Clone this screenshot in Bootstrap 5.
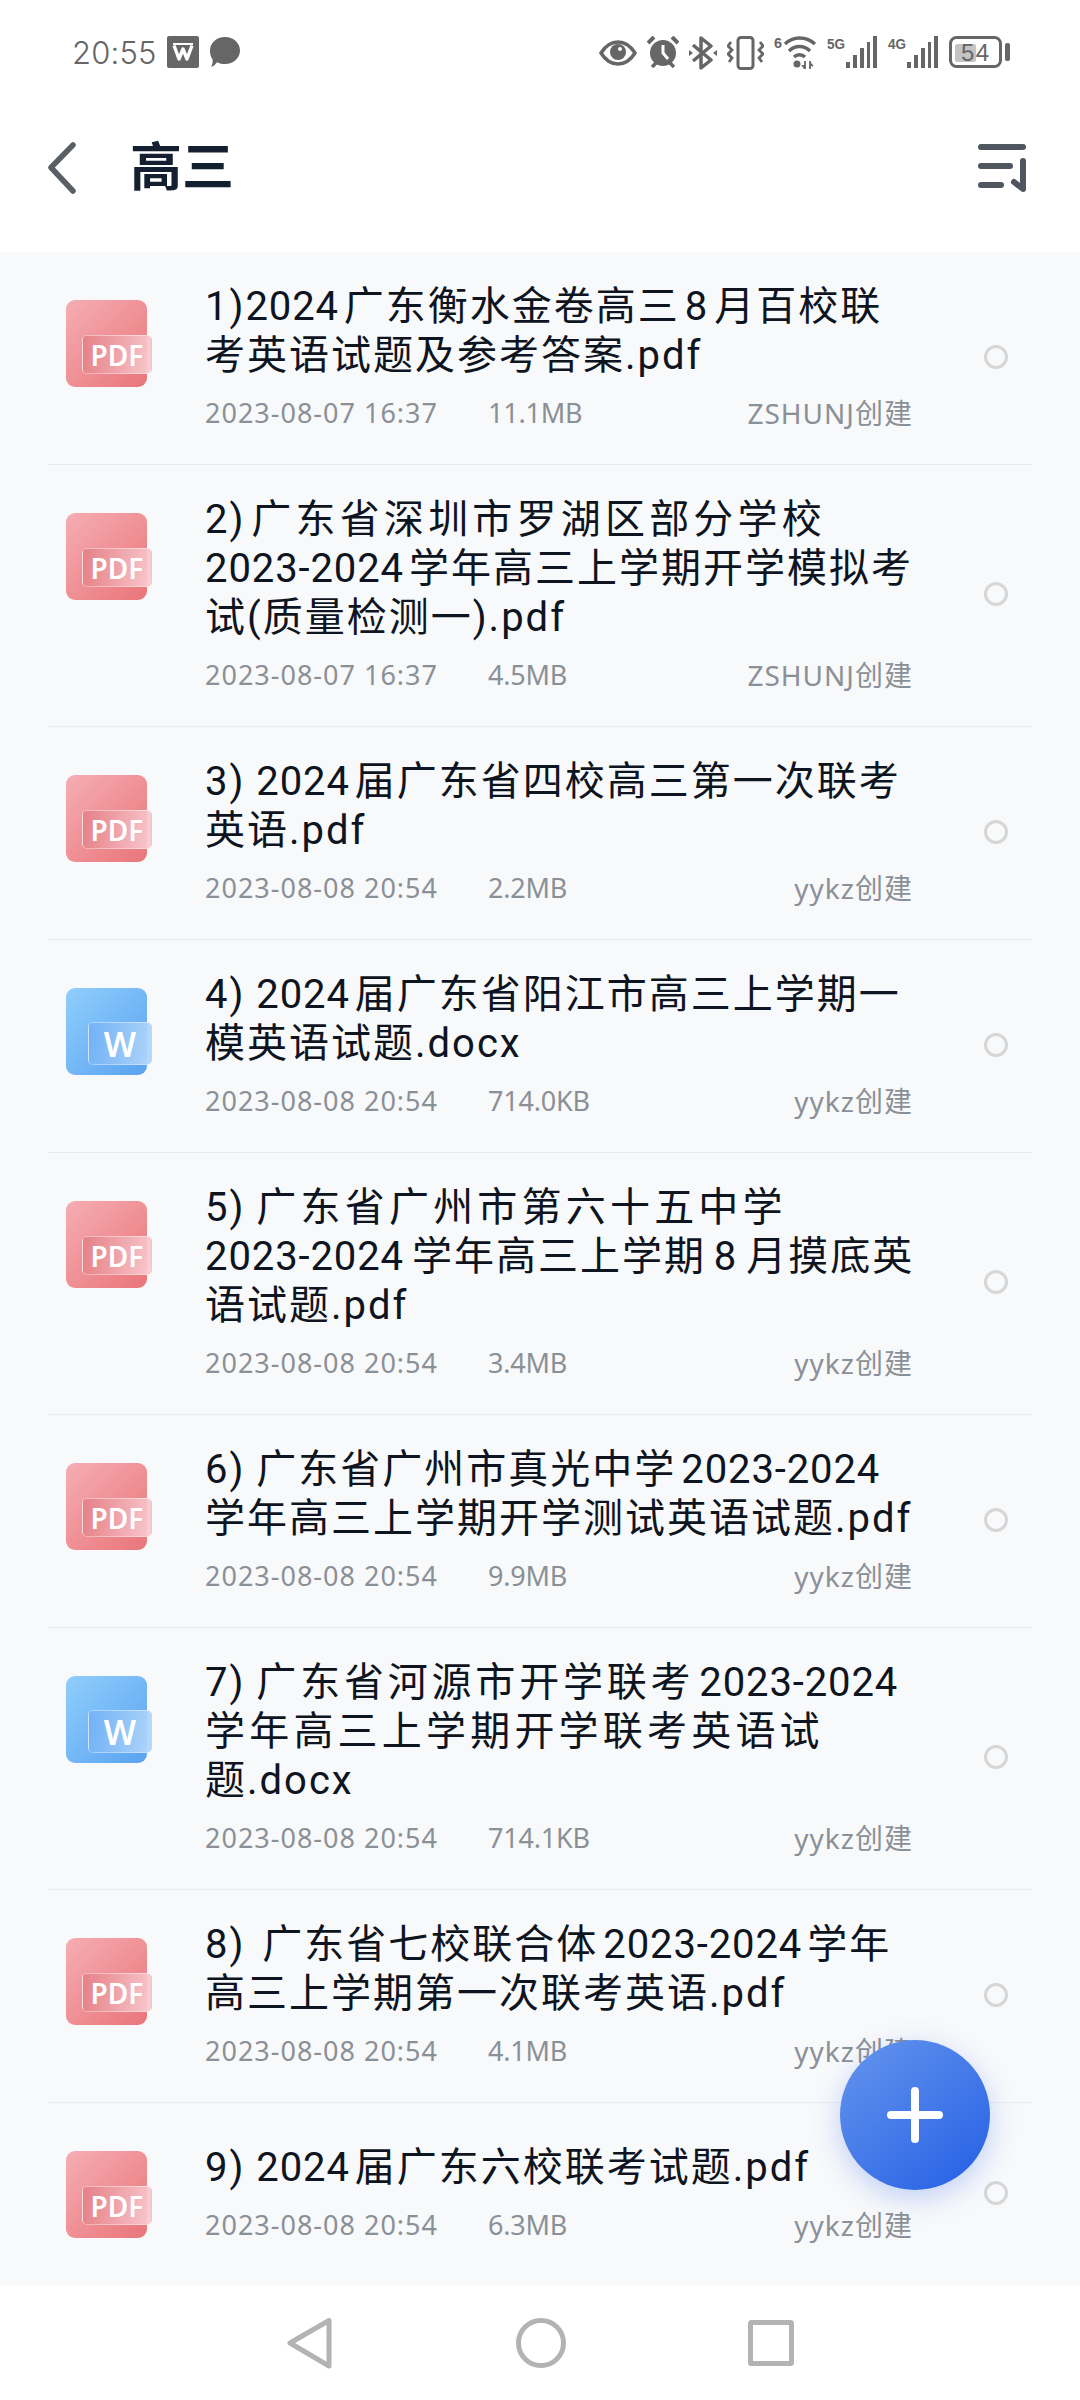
<!DOCTYPE html>
<html lang="zh-CN">
<head>
<meta charset="utf-8">
<title>高三</title>
<link href="https://cdn.jsdelivr.net/npm/bootstrap@5.3.0/dist/css/bootstrap.min.css" rel="stylesheet">
<style>
html,body{margin:0;background:#fff}
.screen{width:1080px;height:2400px;overflow:hidden;font-family:"Noto Sans","Noto Sans CJK SC",sans-serif;background:#fff}
.status-bar{height:84px;padding:36px 70px 0 72px;color:#666;flex:none}
.clock{font-family:"Inter","Noto Sans",sans-serif;font-size:31px;line-height:34px;font-weight:300;letter-spacing:.2px}
.gap-left{gap:10px}
.gap-right{gap:10px}
.app-head{height:168px;padding:0 54px 0 48px;flex:none}
.page-title{font-family:"Noto Sans CJK SC",sans-serif;font-size:52px;font-weight:700;color:#141f30;margin:0 0 8px 54px;line-height:60px}
.file-list{background:#f8f9fb;min-height:0;overflow:hidden}
.list-group-item.file-row{background:transparent;margin:0 48px;padding:0;border-color:#e9ebef;min-height:182px;width:984px}
.file-thumb{width:81px;height:87px;margin:48px 58px 0 18px;border-radius:9px;flex:none}
.thumb-pdf{background:linear-gradient(135deg,#f5aeb3,#e9757a)}
.thumb-doc{background:linear-gradient(135deg,#90cefc,#5aa3f1)}
.thumb-tag{position:absolute;border-radius:5px;border:1.5px solid rgba(255,255,255,.4);color:#fff;font-weight:600;font-family:"Noto Sans",sans-serif;display:flex;align-items:center;justify-content:center;line-height:1}
.thumb-pdf .thumb-tag{left:16px;top:35px;width:70px;height:39px;font-size:28px;background:linear-gradient(100deg,rgba(226,120,126,.75),rgba(248,205,210,.95))}
.thumb-doc .thumb-tag{left:22px;top:34px;width:64px;height:43px;font-size:34px;background:linear-gradient(100deg,rgba(110,175,245,.8),rgba(180,215,250,.95))}
.file-body{width:708px;padding:30px 0 32px}
.file-name{font-family:Roboto,"Noto Sans CJK SC",sans-serif;font-size:40px;line-height:49px;color:#0e1420;letter-spacing:2px;word-spacing:-7px;white-space:nowrap}
.num{letter-spacing:.9px}
.no-a{margin-right:1px}
.no-b{margin-right:6px}
.no-c{margin-right:6px}
.no-d{margin-right:12px}
.spread-s{letter-spacing:3.800px}
.spread-l{letter-spacing:4.200px}
.loose{word-spacing:-4px}
.file-meta{font-size:27px;line-height:38px;color:#8b9096;margin-top:14px;letter-spacing:1px;white-space:nowrap}
.meta-date{width:283px;flex:none}
.meta-size{letter-spacing:-.2px}
.meta-owner{font-size:28px;margin-left:auto}
.pick.form-check-input{width:24px;height:24px;margin:0 24px 3px auto;border:3px solid #d6d6d6;background-color:transparent;flex:none}
.bottom-nav{height:114px;flex:none;background:#fff;padding:30px 0 0 285px}
.nav-glyph{stroke:#b3b3b3;stroke-width:5;fill:none;stroke-linejoin:round}
.nav-mid{margin:0 180px 0 182px}
.fab-add{position:absolute;left:840px;top:2040px;width:150px;height:150px;border-radius:50%;background:linear-gradient(140deg,#6595ed,#245fe5);box-shadow:0 8px 28px rgba(60,110,230,.3);border:0;padding:0}
</style>
</head>
<body>
<div class="screen position-relative d-flex flex-column">
  <div class="status-bar d-flex justify-content-between align-items-start">
    <div class="d-flex align-items-start gap-left">
      <span class="clock">20:55</span>
      <svg width="32" height="32" viewBox="0 0 32 32"><rect width="32" height="32" rx="2" fill="#666"/><path d="M7 9.500 12 23 16 13 20 23 25 9.500" fill="none" stroke="#fff" stroke-width="3.400" stroke-linejoin="round"/><path d="M6 8H26" stroke="#fff" stroke-width="2"/></svg>
      <svg width="32" height="32" viewBox="0 0 32 32"><path d="M16 1C24.500 1 31 7 31 14.500S24.500 28 16 28C13 28 10.500 27.500 8 26.200 6.500 28 4.500 30.500 2 31 3.500 28 4 25.500 3.500 23.200 1.500 20.800 1 17.500 1 14.500 1 7 7.500 1 16 1Z" fill="#666"/></svg>
    </div>
    <div class="d-flex align-items-start gap-right">
      <svg width="38" height="32" viewBox="0 0 38 32"><path d="M2 17C7 9 13 6 19 6S31 9 36 17C31 25 25 28 19 28S7 25 2 17Z" fill="none" stroke="#666" stroke-width="3.500"/><circle cx="19" cy="16" r="8" fill="#666"/><circle cx="21" cy="13" r="2" fill="#fff"/></svg>
      <svg width="32" height="32" viewBox="0 0 32 32"><circle cx="16" cy="17" r="13" fill="#666"/><path d="M16 9V17L21 23" fill="none" stroke="#fff" stroke-width="3"/><path d="M1 7 7 1M25 1 31 7" stroke="#666" stroke-width="4"/><path d="M5 31 9 27M27 31 23 27" stroke="#666" stroke-width="3.500"/></svg>
      <svg width="28" height="34" viewBox="0 0 28 34"><path d="M4 9 22 24 12 32V2L22 10 4 25" fill="none" stroke="#666" stroke-width="3.500" stroke-linejoin="round"/><path d="M0 14 4 17 0 20ZM28 14 24 17 28 20Z" fill="#666"/></svg>
      <svg width="37" height="34" viewBox="0 0 37 34"><rect x="11" y="1.500" width="15" height="31" rx="3" fill="none" stroke="#666" stroke-width="3"/><path d="M4 6 1 10 5 14 1 18 5 22 2 26M33 6 36 10 32 14 36 18 32 22 35 26" fill="none" stroke="#666" stroke-width="2.800"/></svg>
      <svg width="43" height="33" viewBox="0 0 43 33"><text x="0" y="12" font-family="Liberation Sans,sans-serif" font-weight="700" font-size="14" fill="#666" textLength="8" lengthAdjust="spacingAndGlyphs">6</text><path d="M11 8C19 0 32 0 41 8M15 15C21 9 30 9 36 15M20 21C23 18 28 18 31 21" fill="none" stroke="#666" stroke-width="3.400"/><circle cx="23" cy="28" r="3.500" fill="#666"/><path d="M31 33V25L31 30 29 30ZM36 25V33L36 28 39 30" fill="#666" stroke="#666" stroke-width="1.800"/></svg>
      <svg width="51" height="32" viewBox="0 0 51 32"><text x="0" y="13" font-family="Liberation Sans,sans-serif" font-weight="700" font-size="14" fill="#666" textLength="18" lengthAdjust="spacingAndGlyphs">5G</text><path d="M19 26H23V32H19ZM26 19H30V32H26ZM33 12H37V32H33ZM46 0H50V32H46ZM40 6H43V32H40Z" fill="#666"/></svg>
      <svg width="51" height="32" viewBox="0 0 51 32"><text x="0" y="13" font-family="Liberation Sans,sans-serif" font-weight="700" font-size="14" fill="#666" textLength="18" lengthAdjust="spacingAndGlyphs">4G</text><path d="M19 26H23V32H19ZM26 19H30V32H26ZM33 12H37V32H33ZM46 0H50V32H46ZM40 6H43V32H40Z" fill="#666"/></svg>
      <svg width="61" height="32" viewBox="0 0 61 32"><rect x="1.500" y="1.500" width="50" height="29" rx="6" fill="none" stroke="#666" stroke-width="3"/><rect x="6" y="8" width="21" height="18" rx="2" fill="#c4c4c4"/><text x="12" y="25" font-family="Liberation Sans,sans-serif" font-size="24" fill="#666" textLength="28">54</text><rect x="56" y="7" width="5" height="18" rx="2" fill="#666"/></svg>
    </div>
  </div>

  <header class="app-head d-flex align-items-center">
    <svg width="28" height="52" viewBox="0 0 28 52"><path d="M25 3 3 25.500 25 49" fill="none" stroke="#5a5f66" stroke-width="5.500" stroke-linecap="round" stroke-linejoin="round"/></svg>
    <h1 class="page-title">高三</h1>
    <svg class="ms-auto" width="48" height="48" viewBox="0 0 48 48"><path d="M3 3H45M3 22H32M3 41H23M45 17V45L36 38" fill="none" stroke="#50565f" stroke-width="6" stroke-linecap="round" stroke-linejoin="round"/></svg>
  </header>

  <main class="file-list flex-grow-1">
    <div class="list-group list-group-flush">
      <div class="list-group-item file-row d-flex">
        <div class="file-thumb thumb-pdf position-relative"><span class="thumb-tag">PDF</span></div>
        <div class="file-body d-flex flex-column justify-content-center">
          <div class="file-name">1)<span class="num">2024</span> 广东衡水金卷高三 8 月百校联<br>考英语试题及参考答案.pdf</div>
          <div class="file-meta d-flex"><span class="meta-date">2023-08-07 16:37</span><span class="meta-size">11.1MB</span><span class="meta-owner">ZSHUNJ创建</span></div>
        </div>
        <input class="form-check-input pick align-self-center" type="radio" aria-label="选择">
      </div>
      <div class="list-group-item file-row d-flex">
        <div class="file-thumb thumb-pdf position-relative"><span class="thumb-tag">PDF</span></div>
        <div class="file-body d-flex flex-column justify-content-center">
          <div class="file-name"><span class="no-a">2)</span> <span class="spread-l">广东省深圳市罗湖区部分学校</span><br><span class="num">2023-2024</span> 学年高三上学期开学模拟考<br>试(质量检测一).pdf</div>
          <div class="file-meta d-flex"><span class="meta-date">2023-08-07 16:37</span><span class="meta-size">4.5MB</span><span class="meta-owner">ZSHUNJ创建</span></div>
        </div>
        <input class="form-check-input pick align-self-center" type="radio" aria-label="选择">
      </div>
      <div class="list-group-item file-row d-flex">
        <div class="file-thumb thumb-pdf position-relative"><span class="thumb-tag">PDF</span></div>
        <div class="file-body d-flex flex-column justify-content-center">
          <div class="file-name"><span class="no-b">3)</span> <span class="num">2024</span> 届广东省四校高三第一次联考<br>英语.pdf</div>
          <div class="file-meta d-flex"><span class="meta-date">2023-08-08 20:54</span><span class="meta-size">2.2MB</span><span class="meta-owner">yykz创建</span></div>
        </div>
        <input class="form-check-input pick align-self-center" type="radio" aria-label="选择">
      </div>
      <div class="list-group-item file-row d-flex">
        <div class="file-thumb thumb-doc position-relative"><span class="thumb-tag">W</span></div>
        <div class="file-body d-flex flex-column justify-content-center">
          <div class="file-name"><span class="no-b">4)</span> <span class="num">2024</span> 届广东省阳江市高三上学期一<br>模英语试题.docx</div>
          <div class="file-meta d-flex"><span class="meta-date">2023-08-08 20:54</span><span class="meta-size">714.0KB</span><span class="meta-owner">yykz创建</span></div>
        </div>
        <input class="form-check-input pick align-self-center" type="radio" aria-label="选择">
      </div>
      <div class="list-group-item file-row d-flex">
        <div class="file-thumb thumb-pdf position-relative"><span class="thumb-tag">PDF</span></div>
        <div class="file-body d-flex flex-column justify-content-center">
          <div class="file-name"><span class="no-c">5)</span> <span class="spread-l">广东省广州市第六十五中学</span><br><span class="loose"><span class="num">2023-2024</span> 学年高三上学期 8 月摸底英</span><br>语试题.pdf</div>
          <div class="file-meta d-flex"><span class="meta-date">2023-08-08 20:54</span><span class="meta-size">3.4MB</span><span class="meta-owner">yykz创建</span></div>
        </div>
        <input class="form-check-input pick align-self-center" type="radio" aria-label="选择">
      </div>
      <div class="list-group-item file-row d-flex">
        <div class="file-thumb thumb-pdf position-relative"><span class="thumb-tag">PDF</span></div>
        <div class="file-body d-flex flex-column justify-content-center">
          <div class="file-name"><span class="no-c">6)</span> 广东省广州市真光中学 <span class="num">2023-2024</span><br>学年高三上学期开学测试英语试题.pdf</div>
          <div class="file-meta d-flex"><span class="meta-date">2023-08-08 20:54</span><span class="meta-size">9.9MB</span><span class="meta-owner">yykz创建</span></div>
        </div>
        <input class="form-check-input pick align-self-center" type="radio" aria-label="选择">
      </div>
      <div class="list-group-item file-row d-flex">
        <div class="file-thumb thumb-doc position-relative"><span class="thumb-tag">W</span></div>
        <div class="file-body d-flex flex-column justify-content-center">
          <div class="file-name"><span class="no-c">7)</span> <span class="spread-s">广东省河源市开学联考</span> <span class="num">2023-2024</span><br><span class="spread-l">学年高三上学期开学联考英语试</span><br>题.docx</div>
          <div class="file-meta d-flex"><span class="meta-date">2023-08-08 20:54</span><span class="meta-size">714.1KB</span><span class="meta-owner">yykz创建</span></div>
        </div>
        <input class="form-check-input pick align-self-center" type="radio" aria-label="选择">
      </div>
      <div class="list-group-item file-row d-flex">
        <div class="file-thumb thumb-pdf position-relative"><span class="thumb-tag">PDF</span></div>
        <div class="file-body d-flex flex-column justify-content-center">
          <div class="file-name"><span class="no-d">8)</span> 广东省七校联合体 <span class="num">2023-2024</span> 学年<br>高三上学期第一次联考英语.pdf</div>
          <div class="file-meta d-flex"><span class="meta-date">2023-08-08 20:54</span><span class="meta-size">4.1MB</span><span class="meta-owner">yykz创建</span></div>
        </div>
        <input class="form-check-input pick align-self-center" type="radio" aria-label="选择">
      </div>
      <div class="list-group-item file-row d-flex">
        <div class="file-thumb thumb-pdf position-relative"><span class="thumb-tag">PDF</span></div>
        <div class="file-body d-flex flex-column justify-content-center">
          <div class="file-name"><span class="no-b">9)</span> <span class="num">2024</span> 届广东六校联考试题.pdf</div>
          <div class="file-meta d-flex"><span class="meta-date">2023-08-08 20:54</span><span class="meta-size">6.3MB</span><span class="meta-owner">yykz创建</span></div>
        </div>
        <input class="form-check-input pick align-self-center" type="radio" aria-label="选择">
      </div>
    </div>
  </main>

  <nav class="bottom-nav d-flex align-items-start" aria-label="系统导航">
    <svg width="48" height="54" viewBox="0 0 48 54"><path class="nav-glyph" d="M5 27 44 4.500V50Z"/></svg>
    <svg class="nav-mid" width="52" height="54" viewBox="0 0 52 54"><circle class="nav-glyph" cx="26" cy="27" r="22.500"/></svg>
    <svg width="48" height="54" viewBox="0 0 48 54"><rect class="nav-glyph" x="3.500" y="6.500" width="41" height="41" rx="1"/></svg>
  </nav>

  <button class="fab-add d-flex align-items-center justify-content-center" type="button" aria-label="新建">
    <svg width="56" height="56" viewBox="0 0 56 56"><path d="M28 4V52M4 28H52" stroke="#fff" stroke-width="8" stroke-linecap="round"/></svg>
  </button>
</div>
<script src="https://cdn.jsdelivr.net/npm/bootstrap@5.3.0/dist/js/bootstrap.bundle.min.js"></script>
</body>
</html>
